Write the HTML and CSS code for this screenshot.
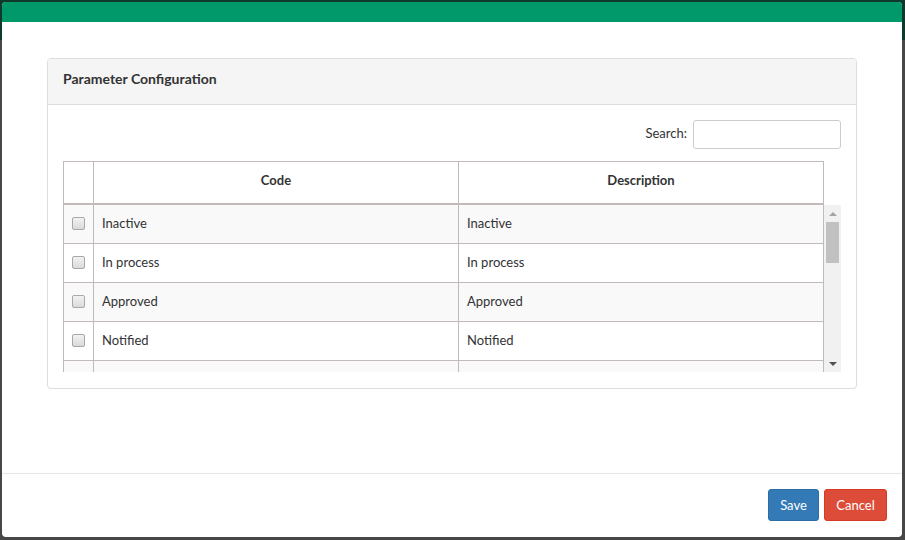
FILE: index.html
```html
<!DOCTYPE html>
<html>
<head>
<meta charset="utf-8">
<link rel="stylesheet" href="styles.css">
</head>
<body>
<div class="modal">
  <div class="modal-header"></div>
  <div class="modal-body">
    <div class="panel">
      <div class="panel-heading">Parameter Configuration</div>
      <div class="panel-body">
        <div class="search-row">
          <label class="search-label">Search:</label>
          <input class="search-input" type="text">
        </div>
        <div class="grid-head">
          <div class="cell cell-check"></div>
          <div class="cell cell-head">Code</div>
          <div class="cell cell-head">Description</div>
        </div>
        <div class="scroll-area">
          <div class="rows">
            <div class="row odd">
              <div class="cell cell-check"><span class="checkbox"></span></div>
              <div class="cell">Inactive</div>
              <div class="cell">Inactive</div>
            </div>
            <div class="row">
              <div class="cell cell-check"><span class="checkbox"></span></div>
              <div class="cell">In process</div>
              <div class="cell">In process</div>
            </div>
            <div class="row odd">
              <div class="cell cell-check"><span class="checkbox"></span></div>
              <div class="cell">Approved</div>
              <div class="cell">Approved</div>
            </div>
            <div class="row">
              <div class="cell cell-check"><span class="checkbox"></span></div>
              <div class="cell">Notified</div>
              <div class="cell">Notified</div>
            </div>
            <div class="row odd">
              <div class="cell cell-check"></div>
              <div class="cell"></div>
              <div class="cell"></div>
            </div>
          </div>
          <div class="scrollbar">
            <div class="sb-btn"><span class="arrow-up"></span></div>
            <div class="sb-track"><div class="sb-thumb"></div></div>
            <div class="sb-btn"><span class="arrow-down"></span></div>
          </div>
        </div>
      </div>
    </div>
  </div>
  <div class="modal-footer">
    <button class="btn btn-save">Save</button>
    <button class="btn btn-cancel">Cancel</button>
  </div>
</div>
</body>
</html>
```

FILE: styles.css
```css
html, body {
  margin: 0;
  padding: 0;
}
body {
  width: 905px;
  height: 540px;
  overflow: hidden;
  background: linear-gradient(to bottom, #0d3a2b 0, #0d3a2b 40px, #474747 40px, #474747 100%);
  font-family: Lato, "Open Sans", sans-serif;
  font-size: 13px;
  color: #333;
}
.modal {
  margin: 2px 0 0 2px;
  width: 900px;
  height: 535px;
  background: #fff;
  border-radius: 4px;
  overflow: hidden;
  display: flex;
  flex-direction: column;
}
.modal-header {
  height: 20px;
  background: #01986a;
  flex: none;
}
.modal-body {
  height: 451px;
  flex: none;
  box-sizing: border-box;
  padding: 36px 45px 0 45px;
}
.panel {
  border: 1px solid #dddddd;
  border-radius: 4px;
  overflow: hidden;
}
.panel-heading {
  height: 39px;
  box-sizing: content-box;
  background: #f5f5f5;
  border-bottom: 1px solid #dddddd;
  padding: 0 15px 6px 15px;
  display: flex;
  align-items: center;
  font-weight: bold;
  font-size: 14px;
  color: #333;
}
.panel-body {
  padding: 15px 15px 16px 15px;
}
.search-row {
  display: flex;
  justify-content: flex-end;
  align-items: center;
  gap: 6px;
  margin-bottom: 12px;
}
.search-label {
  font-size: 13px;
  color: #333;
  margin-bottom: 4px;
}
.search-input {
  width: 148px;
  height: 29px;
  box-sizing: border-box;
  border: 1px solid #cccccc;
  border-radius: 3px;
  margin: 0;
  padding: 0 6px;
  font-family: inherit;
}
.grid-head {
  width: 761px;
  display: grid;
  grid-template-columns: 30px 365px 365px;
  border-top: 1px solid #c2b9b9;
  border-left: 1px solid #c2b9b9;
  border-bottom: 2px solid #c2b9b9;
  box-sizing: border-box;
  height: 44px;
}
.cell {
  border-right: 1px solid #c2b9b9;
  display: flex;
  align-items: center;
  padding-left: 8px;
  padding-bottom: 2px;
  box-sizing: border-box;
  color: #333;
  white-space: nowrap;
}
.cell-head {
  justify-content: center;
  padding-left: 0;
  padding-bottom: 5px;
  font-weight: bold;
}
.cell-check {
  justify-content: center;
  padding-left: 0;
  padding-bottom: 1px;
}
.scroll-area {
  display: flex;
  height: 167px;
  width: 778px;
  overflow: hidden;
}
.rows {
  width: 761px;
  height: 167px;
  overflow: hidden;
  flex: none;
}
.row {
  display: grid;
  grid-template-columns: 30px 365px 365px;
  width: 761px;
  height: 39px;
  box-sizing: border-box;
  border-left: 1px solid #c2b9b9;
  border-bottom: 1px solid #c2b9b9;
  background: #ffffff;
}
.row.odd {
  background: #f9f9f9;
}
.checkbox {
  display: block;
  width: 11px;
  height: 11px;
  border: 1px solid #a8a8a8;
  border-radius: 2px;
  background: linear-gradient(to bottom, #f2f2f2, #dadada);
}
.scrollbar {
  width: 17px;
  flex: none;
  background: #f1f1f1;
  display: flex;
  flex-direction: column;
}
.sb-btn {
  height: 17px;
  display: flex;
  align-items: center;
  justify-content: center;
  flex: none;
}
.arrow-up {
  width: 0;
  height: 0;
  border-left: 4px solid transparent;
  border-right: 4px solid transparent;
  border-bottom: 4px solid #a3a3a3;
}
.arrow-down {
  width: 0;
  height: 0;
  border-left: 4px solid transparent;
  border-right: 4px solid transparent;
  border-top: 4px solid #505050;
}
.sb-track {
  flex: 1;
  display: flex;
  justify-content: center;
}
.sb-thumb {
  width: 13px;
  height: 41px;
  background: #c1c1c1;
}
.modal-footer {
  border-top: 1px solid #e5e5e5;
  padding: 15px;
  display: flex;
  justify-content: flex-end;
  gap: 5px;
}
.btn {
  height: 32px;
  padding: 0;
  border-radius: 3px;
  font-family: inherit;
  font-size: 13px;
  color: #fff;
  margin: 0;
  cursor: pointer;
}
.btn-save {
  width: 51px;
  background: #337ab7;
  border: 1px solid #2e6da4;
}
.btn-cancel {
  width: 63px;
  background: #dd4b39;
  border: 1px solid #d73925;
}
```
